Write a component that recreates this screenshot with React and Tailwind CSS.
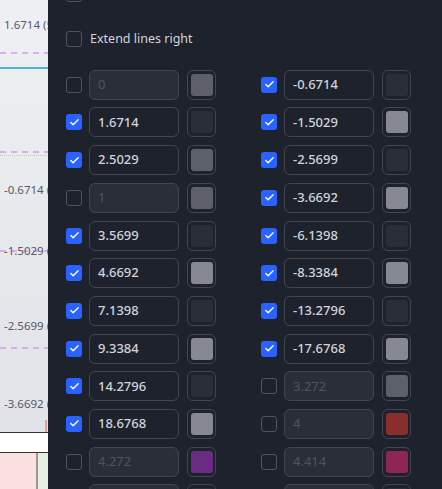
import { Check } from 'lucide-react'

const LEFT = [
  { value: '0', on: false, swatch: '#5d606b' },
  { value: '1.6714', on: true, swatch: '#2a2e39' },
  { value: '2.5029', on: true, swatch: '#5d606b' },
  { value: '1', on: false, swatch: '#5d606b' },
  { value: '3.5699', on: true, swatch: '#2a2e39' },
  { value: '4.6692', on: true, swatch: '#868993' },
  { value: '7.1398', on: true, swatch: '#2a2e39' },
  { value: '9.3384', on: true, swatch: '#868993' },
  { value: '14.2796', on: true, swatch: '#2a2e39' },
  { value: '18.6768', on: true, swatch: '#868993' },
  { value: '4.272', on: false, swatch: '#6a2c82' },
  { value: '4.618', on: false, swatch: '#2a2e39' },
]

const RIGHT = [
  { value: '-0.6714', on: true, swatch: '#2a2e39' },
  { value: '-1.5029', on: true, swatch: '#868993' },
  { value: '-2.5699', on: true, swatch: '#2a2e39' },
  { value: '-3.6692', on: true, swatch: '#868993' },
  { value: '-6.1398', on: true, swatch: '#2a2e39' },
  { value: '-8.3384', on: true, swatch: '#868993' },
  { value: '-13.2796', on: true, swatch: '#2a2e39' },
  { value: '-17.6768', on: true, swatch: '#868993' },
  { value: '3.272', on: false, swatch: '#5d606b' },
  { value: '4', on: false, swatch: '#8a2d2d' },
  { value: '4.414', on: false, swatch: '#8e2554' },
  { value: '4.618', on: false, swatch: '#2a2e39' },
]

function Box({ on }) {
  if (on) {
    return (
      <div className="w-4 h-4 shrink-0 rounded-[3px] bg-[#2962ff] flex items-center justify-center">
        <Check size={11} strokeWidth={3} className="text-white" />
      </div>
    )
  }
  return <div className="w-4 h-4 shrink-0 rounded-[3px] border border-[#50535e]" />
}

function LevelRow({ value, on, swatch }) {
  return (
    <div className="flex items-center h-[30px]">
      <Box on={on} />
      <div
        className={`ml-[7px] w-[90px] h-[30px] rounded-md border border-[#434651] flex items-center px-2 text-[13px] ${
          on ? 'bg-[#1e222d] text-[#d1d4dc] font-medium' : 'bg-[#2a2e39] text-[#50535e]'
        }`}
      >
        {value}
      </div>
      <div className="ml-2 w-[29px] h-[30px] rounded-md border border-[#434651] flex items-center justify-center">
        <div className="w-[22px] h-[22px] rounded-[3px]" style={{ background: swatch }} />
      </div>
    </div>
  )
}

// price labels sit on the chart and run under the dialog edge
function ChartStrip() {
  const labels = [
    { y: 18, t: '1.6714 (5' },
    { y: 183, t: '-0.6714 (5' },
    { y: 244, t: '-1.5029 (5' },
    { y: 319, t: '-2.5699 (5' },
    { y: 397, t: '-3.6692 (5' },
  ]
  return (
    <div className="relative w-[48px] h-full shrink-0 bg-gradient-to-b from-[#eff0f3] to-[#dfe1e6] overflow-hidden">
      <svg className="absolute inset-0" width="48" height="489">
        <line x1="0" y1="53" x2="48" y2="53" stroke="#d66bf0" strokeDasharray="6 5" />
        <line x1="0" y1="68" x2="48" y2="68" stroke="#17a2b8" strokeWidth="1.5" />
        <line x1="0" y1="152" x2="48" y2="152" stroke="#d66bf0" strokeDasharray="6 5" />
        <line x1="0" y1="155.5" x2="48" y2="155.5" stroke="#b8d6a8" strokeDasharray="1 1" />
        <line x1="0" y1="251" x2="48" y2="251" stroke="#d66bf0" strokeDasharray="6 5" />
        <line x1="0" y1="348" x2="48" y2="348" stroke="#d66bf0" strokeDasharray="6 5" />
        <rect x="45" y="420" width="2" height="12" fill="#e8a08a" />
        <rect x="0" y="432" width="48" height="20" fill="#ffffff" />
        <line x1="0" y1="432.5" x2="48" y2="432.5" stroke="#333" />
        <line x1="0" y1="452.5" x2="48" y2="452.5" stroke="#333" />
        <rect x="0" y="453" width="37" height="36" fill="#fbe0e0" />
        <rect x="37" y="453" width="11" height="36" fill="#e4f0e2" />
        <line x1="37" y1="453" x2="37" y2="489" stroke="#8a7a7a" strokeWidth="1.5" />
      </svg>
      {labels.map(l => (
        <div
          key={l.t}
          className="absolute left-[4px] text-[11.5px] text-[#555a66] whitespace-nowrap leading-[14px]"
          style={{ top: l.y }}
        >
          {l.t}
        </div>
      ))}
    </div>
  )
}

export default function App() {
  return (
    <div
      className="flex w-[442px] h-[489px] overflow-hidden bg-[#1e222d]"
      style={{ fontFamily: '"Noto Sans", "Open Sans", sans-serif' }}
    >
      <ChartStrip />
      <div className="flex-1 pl-[18px] shadow-[-2px_0_6px_rgba(0,0,0,0.25)]">
        <div className="-mt-[14px]">
          <Box on={false} />
        </div>
        <div className="mt-[28px] flex items-center gap-2">
          <Box on={false} />
          <span className="text-[12.5px] text-[#d1d4dc]">Extend lines right</span>
        </div>
        <div className="mt-[21px] grid grid-cols-[150px_150px] gap-x-[45px] gap-y-[7.7px]">
          {LEFT.map((l, i) => (
            <>
              <LevelRow key={'l' + i} {...l} />
              <LevelRow key={'r' + i} {...RIGHT[i]} />
            </>
          ))}
        </div>
      </div>
    </div>
  )
}
